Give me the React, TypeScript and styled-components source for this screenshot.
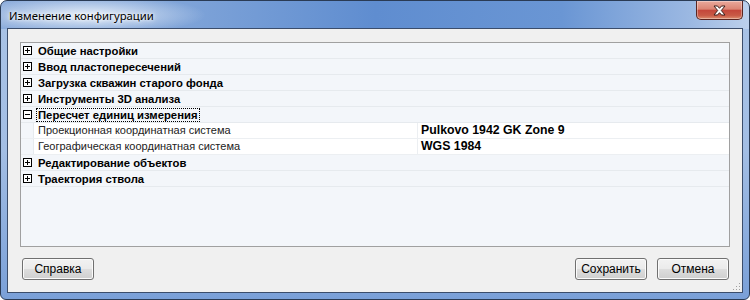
import React from "react";
import styled, { createGlobalStyle } from "styled-components";

const GlobalStyle = createGlobalStyle`
  html, body { margin: 0; padding: 0; background: #ffffff; }
  * { box-sizing: border-box; }
`;

const Window = styled.div`
  position: relative;
  width: 750px;
  height: 300px;
  border: 1px solid #2a3b55;
  border-radius: 7px 7px 6px 6px;
  padding: 0 6px 6px;
  display: flex;
  flex-direction: column;
  overflow: hidden;
  background:
    radial-gradient(ellipse 120px 20px at 85px 14px, rgba(235, 242, 250, 0.95), rgba(235, 242, 250, 0) 100%),
    linear-gradient(90deg, #88a9da 0%, #7ea3d8 25%, #5f8dd0 50%, #6a96d4 75%, #9bb8e2 92%, #bcd0ec 100%) top / 100% 28px no-repeat,
    linear-gradient(180deg, #a9c3e6 0%, #a3bee4 50%, #7aa0d8 100%);
`;

const TitleBar = styled.div`
  height: 27px;
  display: flex;
  align-items: flex-start;
  flex-shrink: 0;
`;

const Title = styled.div`
  margin-left: 2px;
  line-height: 29px;
  font-family: "Noto Sans", "Open Sans", sans-serif;
  font-size: 11.3px;
  color: #000;
  text-shadow: 0 0 6px #fff, 0 0 3px #fff;
`;

const CloseButton = styled.div`
  margin-left: auto;
  width: 47px;
  height: 19px;
  border: 1px solid #5a2520;
  border-top: none;
  border-radius: 0 0 5px 5px;
  background: linear-gradient(180deg, #eaa99c 0%, #dc8574 45%, #c4473a 52%, #c85a46 80%, #dd8e6e 100%);
  box-shadow: inset 0 0 0 1px rgba(255, 255, 255, 0.35);
  display: flex;
  align-items: center;
  justify-content: center;
`;

const Client = styled.div`
  flex: 1;
  border: 1px solid #3b4d6b;
  background: #f0f0f0;
  display: flex;
  flex-direction: column;
  position: relative;
`;

const Grid = styled.div`
  margin: 13px 12px 0 12px;
  height: 205px;
  border: 1px solid #a0a0a0;
  background: #f3f6fa;
  display: flex;
  flex-direction: column;
`;

const CategoryRow = styled.div`
  height: 16px;
  display: flex;
  align-items: center;
  border-bottom: 1px solid #e6eaee;
  flex-shrink: 0;
`;

const Gutter = styled.div`
  width: 13px;
  height: 100%;
  display: flex;
  align-items: center;
  padding-left: 2px;
  flex-shrink: 0;
`;

const CategoryLabel = styled.div<{ $focused?: boolean }>`
  margin-left: 2px;
  padding: 0 1px;
  height: 14px;
  line-height: 13px;
  border: 1px dotted ${(p) => (p.$focused ? "#000" : "transparent")};
  font-family: "Liberation Sans", Arial, sans-serif;
  font-size: 11.3px;
  font-weight: bold;
  color: #000;
  white-space: nowrap;
`;

const PropRow = styled.div`
  height: 16px;
  display: flex;
  border-bottom: 1px solid #eceff2;
  flex-shrink: 0;
`;

const PropGutter = styled.div`
  width: 13px;
  flex-shrink: 0;
  border-right: 1px solid #e6eaee;
`;

const NameCell = styled.div`
  width: 384px;
  background: #fff;
  border-right: 1px solid #eceff2;
  padding-left: 4px;
  font-family: "Liberation Sans", Arial, sans-serif;
  font-size: 11px;
  line-height: 15px;
  color: #222;
  white-space: nowrap;
`;

const ValueCell = styled.div`
  flex: 1;
  background: #fff;
  padding-left: 3px;
  font-family: "Liberation Sans", Arial, sans-serif;
  font-size: 12.3px;
  font-weight: bold;
  line-height: 15px;
  color: #000;
  white-space: nowrap;
`;

const Footer = styled.div`
  margin-top: 11px;
  padding: 0 13px 0 14px;
  display: flex;
  gap: 10px;
`;

const Spacer = styled.div`
  flex: 1;
`;

const Button = styled.button`
  width: 72px;
  height: 22px;
  padding: 0;
  border: 1px solid #707070;
  border-radius: 3px;
  background: linear-gradient(180deg, #f2f2f2 0%, #ebebeb 48%, #dddddd 52%, #cfcfcf 100%);
  box-shadow: inset 0 0 0 1px #fbfbfb;
  font-family: "Liberation Sans", Arial, sans-serif;
  font-size: 12px;
  color: #000;
`;

const Grip = styled.svg`
  position: absolute;
  right: 1px;
  bottom: 1px;
`;

const Expander = ({ open }: { open?: boolean }) => (
  <svg width="9" height="9" viewBox="0 0 9 9">
    <rect x="0.5" y="0.5" width="8" height="8" fill="#fff" stroke="#000" />
    <line x1="2" y1="4.5" x2="7" y2="4.5" stroke="#000" />
    {!open && <line x1="4.5" y1="2" x2="4.5" y2="7" stroke="#000" />}
  </svg>
);

type Prop = { name: string; value: string };
type Category = { title: string; open?: boolean; focused?: boolean; props?: Prop[] };

const categories: Category[] = [
  { title: "Общие настройки" },
  { title: "Ввод пластопересечений" },
  { title: "Загрузка скважин старого фонда" },
  { title: "Инструменты 3D анализа" },
  {
    title: "Пересчет единиц измерения",
    open: true,
    focused: true,
    props: [
      { name: "Проекционная координатная система", value: "Pulkovo 1942 GK Zone 9" },
      { name: "Географическая координатная система", value: "WGS 1984" },
    ],
  },
  { title: "Редактирование объектов" },
  { title: "Траектория ствола" },
];

export default function App() {
  return (
    <>
      <GlobalStyle />
      <Window>
        <TitleBar>
          <Title>Изменение конфигурации</Title>
          <CloseButton>
            <svg width="13" height="11" viewBox="0 0 13 11">
              <path
                d="M1 1 H4.5 L6.5 3.3 L8.5 1 H12 L8.3 5.5 L12 10 H8.5 L6.5 7.7 L4.5 10 H1 L4.7 5.5 Z"
                fill="#fff"
                stroke="#3c1f1a"
                strokeWidth="1"
                strokeLinejoin="round"
              />
            </svg>
          </CloseButton>
        </TitleBar>
        <Client>
          <Grid>
            {categories.map((c) => (
              <React.Fragment key={c.title}>
                <CategoryRow>
                  <Gutter>
                    <Expander open={c.open} />
                  </Gutter>
                  <CategoryLabel $focused={c.focused}>{c.title}</CategoryLabel>
                </CategoryRow>
                {c.open &&
                  c.props?.map((p) => (
                    <PropRow key={p.name}>
                      <PropGutter />
                      <NameCell>{p.name}</NameCell>
                      <ValueCell>{p.value}</ValueCell>
                    </PropRow>
                  ))}
              </React.Fragment>
            ))}
          </Grid>
          <Footer>
            <Button>Справка</Button>
            <Spacer />
            <Button>Сохранить</Button>
            <Button>Отмена</Button>
          </Footer>
          <Grip width="9" height="9" viewBox="0 0 9 9">
            {[
              [7, 1],
              [7, 4],
              [4, 4],
              [7, 7],
              [4, 7],
              [1, 7],
            ].map(([x, y]) => (
              <rect key={`${x}-${y}`} x={x} y={y} width="1" height="1" fill="#a0a0a0" />
            ))}
          </Grip>
        </Client>
      </Window>
    </>
  );
}
